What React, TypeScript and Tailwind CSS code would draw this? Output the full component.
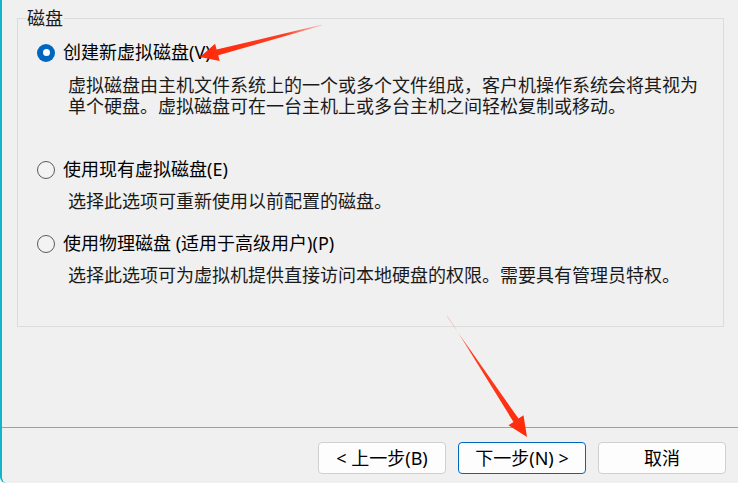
const FONT = { fontFamily: '"Noto Sans", "Noto Sans CJK SC", sans-serif' };

type Option = {
  label: string;
  desc: string[];
  checked?: boolean;
  rowTop: string;
  descTop: string;
};

const options: Option[] = [
  {
    label: "创建新虚拟磁盘(V)",
    desc: [
      "虚拟磁盘由主机文件系统上的一个或多个文件组成，客户机操作系统会将其视为",
      "单个硬盘。虚拟磁盘可在一台主机上或多台主机之间轻松复制或移动。",
    ],
    checked: true,
    rowTop: "mt-[14px]",
    descTop: "mt-[12px]",
  },
  {
    label: "使用现有虚拟磁盘(E)",
    desc: ["选择此选项可重新使用以前配置的磁盘。"],
    rowTop: "mt-[42px]",
    descTop: "mt-[11px]",
  },
  {
    label: "使用物理磁盘 (适用于高级用户)(P)",
    desc: ["选择此选项可为虚拟机提供直接访问本地硬盘的权限。需要具有管理员特权。"],
    rowTop: "mt-[21px]",
    descTop: "mt-[11px]",
  },
];

function Radio({ checked }: { checked?: boolean }) {
  if (checked) {
    return (
      <span className="flex h-[18px] w-[18px] shrink-0 items-center justify-center rounded-full bg-[#0067c0]">
        <span className="h-[7px] w-[7px] rounded-full bg-white" />
      </span>
    );
  }
  return (
    <span className="h-[18px] w-[18px] shrink-0 rounded-full border border-[#5a5a5a] bg-[#f3f3f3]" />
  );
}

function Arrows() {
  return (
    <svg
      className="pointer-events-none absolute left-0 top-0"
      width={738}
      height={483}
      viewBox="0 0 738 483"
    >
      <defs>
        <linearGradient id="a1" x1="320" y1="25" x2="198" y2="57" gradientUnits="userSpaceOnUse">
          <stop offset="0" stopColor="#ff2a0a" stopOpacity="0.15" />
          <stop offset="0.3" stopColor="#ff2a0a" stopOpacity="0.9" />
          <stop offset="1" stopColor="#ff2a0a" />
        </linearGradient>
        <linearGradient id="a2" x1="445" y1="316" x2="525" y2="437" gradientUnits="userSpaceOnUse">
          <stop offset="0" stopColor="#ff2a0a" stopOpacity="0.15" />
          <stop offset="0.3" stopColor="#ff2a0a" stopOpacity="0.9" />
          <stop offset="1" stopColor="#ff2a0a" />
        </linearGradient>
      </defs>
      <polygon
        fill="url(#a1)"
        points="320,24.5 214.6,49.5 213.1,43.7 198,57 217.7,61.1 216.2,55.3 320,25.5"
      />
      <polygon
        fill="url(#a2)"
        points="444.5,316 516.5,418.6 521.5,415.3 525,437 506.5,425.3 511.5,422 445.5,315.6"
      />
    </svg>
  );
}

export default function App() {
  return (
    <div
      className="relative flex h-[483px] w-[738px] flex-col overflow-hidden rounded-bl-[6px] border-l-2 border-[#12b6c8] bg-[#f0f0f0] text-[#1a1a1a]"
      style={FONT}
    >
      <div className="h-[427px]">
        <fieldset className="ml-[15px] mt-[8px] h-[319px] w-[707px] border border-[#dcdcdc]">
          <legend className="ml-[8px] px-[1px] text-[18px] leading-[20px]">磁盘</legend>
          <div className="pl-[19px]">
            {options.map((o) => (
              <div key={o.label}>
                <div className={`flex h-[21px] items-center gap-[8px] ${o.rowTop}`}>
                  <Radio checked={o.checked} />
                  <span className="whitespace-nowrap text-[18px] leading-[21px] text-black">
                    {o.label}
                  </span>
                </div>
                <div className={`pl-[31px] text-[18px] leading-[21px] ${o.descTop}`}>
                  {o.desc.map((line) => (
                    <div key={line} className="whitespace-nowrap">
                      {line}
                    </div>
                  ))}
                </div>
              </div>
            ))}
          </div>
        </fieldset>
      </div>

      <div className="h-px bg-[#a0a0a0]" />

      {/* footer buttons */}
      <div className="flex justify-end gap-[12px] pr-[12px] pt-[14px]">
        <button className="h-[32px] w-[128px] rounded-[4px] border border-[#d0d0d0] bg-[#fdfdfd] text-[18px] leading-none text-black">
          &lt; 上一步(B)
        </button>
        <button className="h-[32px] w-[128px] rounded-[4px] border border-[#0067c0] bg-[#fdfdfd] text-[18px] leading-none text-black">
          下一步(N) &gt;
        </button>
        <button className="h-[32px] w-[128px] rounded-[4px] border border-[#d0d0d0] bg-[#fdfdfd] text-[18px] leading-none text-black">
          取消
        </button>
      </div>

      <Arrows />
    </div>
  );
}
